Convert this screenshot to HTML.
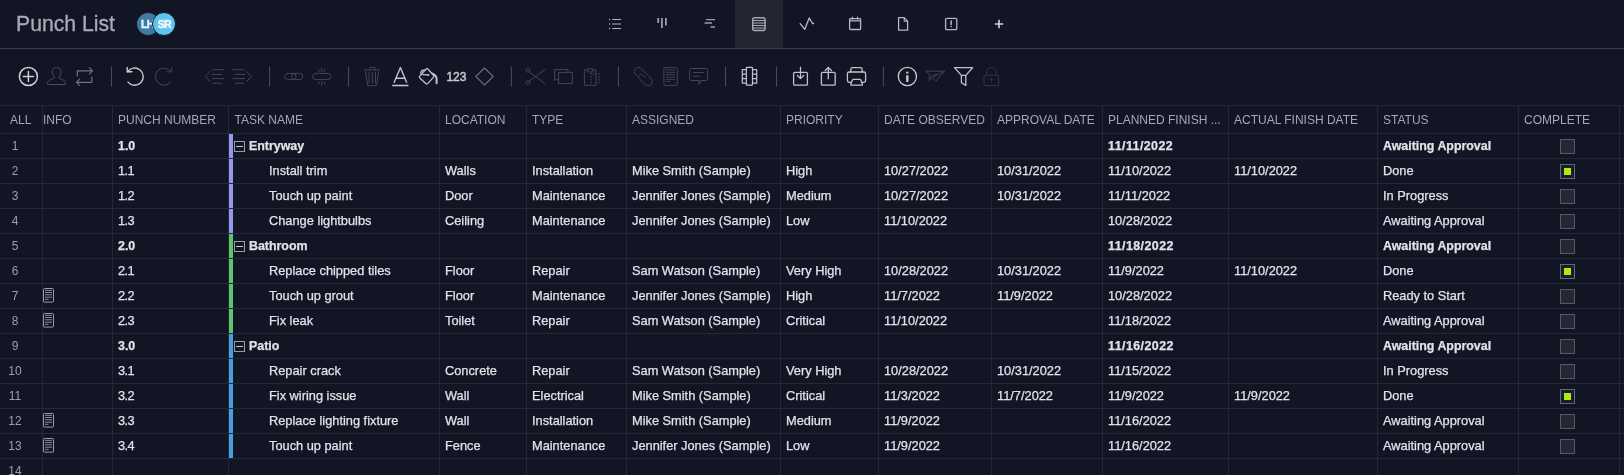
<!DOCTYPE html><html><head><meta charset="utf-8"><title>Punch List</title><style>
html,body{margin:0;padding:0;background:#111524;width:1624px;height:475px;overflow:hidden;position:relative;font-family:"Liberation Sans",sans-serif;}
.t{position:absolute;white-space:nowrap;}
.g{position:absolute;left:0;top:0;width:1624px;height:475px;will-change:transform;}
.h{font-size:12px;color:#a5a7b3;top:107px;line-height:27px;height:27px;}
.c{font-size:12.8px;color:#e2e3e8;line-height:24px;-webkit-text-stroke:0.25px #e2e3e8;}
.n{font-size:12px;color:#9d9faa;line-height:24px;}
.b{font-weight:bold;font-size:12.4px;}
.hl{position:absolute;left:0;width:1624px;height:1px;background:#252836;}
.vl{position:absolute;top:105px;height:370px;width:1px;background:#252836;}
.cb{position:absolute;left:1560px;width:13px;height:13px;border:1px solid #575a66;background:#252833;}
.cb i{position:absolute;left:3px;top:3px;width:7px;height:7px;background:#acec14;}
.cb.k{background:#1a1d29;border-color:#666975;}
.bar{position:absolute;left:229px;width:4px;height:24px;}
.mb{position:absolute;left:234px;width:9px;height:9px;border:1px solid #9a9ca6;}
.mb i{position:absolute;left:1px;top:4px;width:7px;height:1px;background:#c4c6cf;}
</style></head><body><div class="g">
<div class="t" style="left:16px;top:8.5px;font-size:21.2px;line-height:30px;color:#a9abb7;-webkit-text-stroke:0.3px #a9abb7;">Punch List</div>
<div style="position:absolute;left:137px;top:13px;width:22px;height:22px;border-radius:50%;background:#3d7aa8;"></div>
<div class="t" style="left:141px;top:12.5px;width:20px;font-size:10.6px;letter-spacing:-0.6px;line-height:22px;font-weight:bold;color:#eef3f8;-webkit-text-stroke:0.3px #eef3f8;">LH</div>
<div style="position:absolute;left:152px;top:12px;width:22px;height:22px;border-radius:50%;background:#5fc4ed;border:1px solid #111524;"></div>
<div class="t" style="left:153px;top:12.5px;width:23px;text-align:center;font-size:10.6px;letter-spacing:-0.6px;text-indent:-0.6px;line-height:22px;font-weight:bold;color:#f4f9fd;-webkit-text-stroke:0.3px #f4f9fd;">SR</div>
<div style="position:absolute;left:735px;top:0;width:48px;height:48px;background:#232631;"></div>
<div class="hl" style="top:48px;background:#393c4b;"></div>
<svg style="position:absolute;left:0;top:0" width="1624" height="105" viewBox="0 0 1624 105" fill="none" stroke-linecap="round" stroke-linejoin="round">
<!-- top nav -->
<g stroke="#b4b6c1" stroke-width="1.1" stroke-linecap="butt">
  <path d="M612.2 19.5H621M612.2 24H621M612.2 28.5H621"/>
</g>
<g fill="#b4b6c1"><circle cx="609.6" cy="19.5" r="0.65"/><circle cx="609.6" cy="24" r="0.65"/><circle cx="609.6" cy="28.5" r="0.65"/></g>
<g fill="#9a9ca8">
  <rect x="657.3" y="18" width="1.8" height="5"/><rect x="661" y="18" width="1.8" height="10"/><rect x="665" y="18" width="1.8" height="7.5"/>
</g>
<g stroke="#9a9ca8" stroke-width="1.4" stroke-linecap="butt">
  <path d="M706 19.6H715M704.5 23H712M710.5 27H715"/>
</g>
<g stroke="#a5a7b2" stroke-width="1.4">
  <rect x="752.7" y="17.7" width="12.4" height="12.8" rx="2"/>
  <path d="M753 20.5H765M753 23H765M753 25.5H765M753 28H765" stroke-width="1.1"/>
</g>
<g stroke="#b9bbc5" stroke-width="1.3">
  <path d="M800.2 23.6L804.8 29.3L809.2 18L812.5 23.5H813.6"/>
</g>
<g stroke="#b4b6c1" stroke-width="1.3">
  <rect x="849.6" y="18.7" width="11" height="10.8" rx="0.8"/>
  <path d="M849.6 20.9H860.6M852.4 17.2V19M857.5 17.2V19"/>
</g>
<g stroke="#b4b6c1" stroke-width="1.3">
  <path d="M898.6 17.6H904.2L907.6 21.2V30.2H898.6Z"/>
  <path d="M904.2 17.8V21.2H907.4" stroke-width="1.1"/>
</g>
<g stroke="#b4b6c1" stroke-width="1.3">
  <rect x="945.6" y="18.3" width="11.2" height="11.4" rx="1.2"/>
  <path d="M951.2 21V24.4" stroke-width="1.5"/>
</g>
<circle cx="951.2" cy="26.6" r="0.8" fill="#b4b6c1"/>
<g stroke="#d2d3da" stroke-width="1.6" stroke-linecap="butt">
  <path d="M994.8 24H1003.2M999 19.8V28.2"/>
</g>
<!-- toolbar -->
<g stroke="#cdced6" stroke-width="1.5">
  <circle cx="28.4" cy="76.5" r="9"/>
  <path d="M23.3 76.5H33.5M28.4 71.4V81.6"/>
</g>
<g stroke="#4a4d59" stroke-width="1">
  <path d="M54.6 77.6C52.6 75.6 52.3 73 52.3 71.6C52.3 69 54 67.6 56.6 67.6C59.2 67.6 60.9 69 60.9 71.6C60.9 73 60.6 75.6 58.6 77.6C60 79 62.4 79.4 64 80.4C65.5 81.4 66 83 65.6 84.5H47.6C47.2 83 47.7 81.4 49.2 80.4C50.8 79.4 53.2 79 54.6 77.6Z"/>
</g>
<g stroke="#72757f" stroke-width="1.2">
  <path d="M77.3 75.8V70.8H92.3M89.4 67.7L92.4 70.8L89.4 73.9"/>
  <path d="M91.8 77.2V82.3H76.6M79.5 79.2L76.5 82.3L79.5 85.4"/>
</g>
<g stroke="#474a57" stroke-width="1.1"><path d="M111.5 67V86M269.6 67V86M348.5 67V86M511.4 67V86M618.4 67V86M725.5 67V86M776.5 67V86M883.4 67V86"/></g>
<g stroke="#c8c9d1" stroke-width="1.4">
  <path d="M128 82.1A8.6 8.6 0 1 0 127.5 71.9"/>
  <path d="M127.2 67.4V71.8H131.9"/>
</g>
<g stroke="#444753" stroke-width="1">
  <path d="M170.7 82.1A8.6 8.6 0 1 1 171.2 71.9"/>
  <path d="M171.7 67.4V71.8H167"/>
</g>
<g stroke="#444753" stroke-width="1">
  <path d="M212.8 69.7H224M212.2 74.4H221.6M212.2 78.6H224M212.8 83.2H221.6M210.2 71.4L205.5 76.5L210.2 81.6"/>
  <path d="M233 69.7H244M235.4 74.4H244.6M233 78.6H244.6M235.4 83.2H244M246.6 71.4L251.3 76.5L246.6 81.6"/>
</g>
<g stroke="#444753" stroke-width="1">
  <rect x="284.6" y="73.4" width="11.4" height="6.2" rx="3.1"/>
  <rect x="291.4" y="73.4" width="11.4" height="6.2" rx="3.1"/>
  <rect x="312.6" y="73.4" width="18.4" height="6.2" rx="3.1"/>
  <path d="M321.7 68.2V71.2M318.2 69.2L319.8 71.6M325.2 69.2L323.6 71.6M321.7 82V85.4M318.2 84.4L319.8 82M325.2 84.4L323.6 82"/>
</g>
<g stroke="#444753" stroke-width="1">
  <path d="M364.3 70H379.6M369.6 70V67.6H375V70M365.6 71.6L367.6 85.6H376.7L378.6 71.6M369.1 72.6V83M372.3 72.6V83M375.5 72.6V83"/>
</g>
<g stroke="#c1c3cc" stroke-width="1.4" stroke-linecap="butt">
  <path d="M394 82.8L400.4 67.6L406.8 82.8M396 78.2H404.8"/>
  <path d="M392.2 85.5H408.4" stroke-width="1.6"/>
</g>
<g stroke="#c1c3cc" stroke-width="1.3">
  <path d="M425.9 69.2Q427 68 428.1 69.2L433.4 75.2Q434.4 76.3 433.4 77.4L427.9 83.4Q426.8 84.6 425.7 83.5L419.9 78Q418.8 77 419.9 75.9Z"/>
  <path d="M421.4 74.6C419.9 72.6 421.4 69.6 424.9 70.4"/>
  <path d="M422.8 74.6L428.4 74.9"/>
  <path d="M432.6 73.6C435.6 75 436.6 76.6 436.6 79V83.2" stroke-width="2"/>
</g>
<circle cx="428.4" cy="74.9" r="1" fill="#c1c3cc"/>
<text x="446.4" y="81.2" fill="#c8c9d1" stroke="#c8c9d1" stroke-width="0.45" font-family="Liberation Sans" font-size="12.1">123</text>
<g stroke="#666977" stroke-width="1.2">
  <path d="M484.5 68L493.2 76.5L484.5 85L475.8 76.5Z"/>
</g>
<g stroke="#444753" stroke-width="1">
  <circle cx="527.9" cy="70.3" r="1.9"/><circle cx="527.9" cy="82.6" r="1.9"/>
  <path d="M529.3 71.8L545 83.8M529.3 81.1L545 69.5"/>
</g>
<g stroke="#444753" stroke-width="1">
  <path d="M558.8 79.8H554.6V69.6H568V72.6"/>
  <rect x="559" y="72.4" width="13.4" height="11.2"/>
</g>
<g stroke="#444753" stroke-width="1">
  <path d="M587.6 69.8H584.4V85.3H596V69.8H592.8"/>
  <path d="M587.6 71.5V68.8H592.8V71.5Z"/>
  <path d="M591 73.5V74M591 76.5V77M591 79.5V80M591 82.3V82.8M599 73.5V74M599 76.5V77M599 79.5V80M599 82.3V82.8M594 73.5V74" stroke-width="1.3"/>
</g>
<g stroke="#444753" stroke-width="1">
  <path d="M636.6 75.6C634 73.4 633.6 70 636 68.2C637.8 66.8 640 67.4 641.6 69L651 78.4C652.8 80.2 652.8 83.4 651 84.9C649.2 86.4 646.6 86 645 84.4L639.4 78.8C638.2 77.6 638.3 76 639.5 75.1C640.7 74.2 642.3 74.5 643.3 75.5L645.7 77.9"/>
</g>
<g stroke="#444753" stroke-width="1">
  <rect x="663.9" y="67.7" width="13.4" height="17.7" rx="1"/>
  <path d="M666.2 69.9H674.6M666.2 72.3H674.6M666.2 74.7H674.6M666.2 77.1H674.6M666.2 79.4H674.6M666.2 81.6H670.4" stroke-width="0.9"/>
</g>
<g stroke="#444753" stroke-width="1">
  <path d="M691.4 68.5H706C707 68.5 707.5 69 707.5 70V79C707.5 80 707 80.5 706 80.5H701.2L698.8 84.3L699.6 80.5H691.4C690.4 80.5 689.6 80 689.6 79V70C689.6 69 690.4 68.5 691.4 68.5Z"/>
  <path d="M693.2 72.5H703.8M693.2 76.2H699.4"/>
</g>
<g stroke="#c1c3cc" stroke-width="1.2">
  <rect x="746.3" y="67.4" width="6.2" height="17.8" rx="0.8"/>
  <path d="M746.3 69.6H742.3V83.2H746.3M742.3 74.2H746.3M742.3 78.7H746.3"/>
  <path d="M752.5 69.6H756.7V83.2H752.5M756.7 74.2H752.5M756.7 78.7H752.5"/>
</g>
<g stroke="#c1c3cc" stroke-width="1.3">
  <rect x="793.6" y="72.4" width="13.8" height="12.8" rx="1.2"/>
  <path d="M800.5 67.2V78.6M797.4 75.5L800.5 78.6L803.6 75.5"/>
  <rect x="821.4" y="72.4" width="13.8" height="12.8" rx="1.2"/>
  <path d="M828.3 78.8V67.4M825.2 70.5L828.3 67.4L831.4 70.5"/>
</g>
<g stroke="#c1c3cc" stroke-width="1.3">
  <path d="M850.8 72V69.4C850.8 68.2 851.6 67.6 852.6 67.6H860.4C861.6 67.6 862.2 68.2 862.2 69.4V72"/>
  <path d="M850.8 82.4H849.2C848 82.4 847.4 81.8 847.4 80.6V73.8C847.4 72.6 848 72 849.2 72H863.8C865 72 865.6 72.6 865.6 73.8V80.6C865.6 81.8 865 82.4 863.8 82.4H862.2"/>
  <path d="M851.4 85.2H861.8Q862.8 85.2 862.4 84.2L861 80.4Q860.6 79.4 859.6 79.4H853.6Q852.6 79.4 852.2 80.4L850.8 84.2Q850.4 85.2 851.4 85.2Z"/>
</g>
<g stroke="#c6c7cf" stroke-width="1.3">
  <circle cx="907.4" cy="76.5" r="9.1"/>
</g>
<circle cx="907.3" cy="72.6" r="1.2" fill="#c6c7cf"/>
<rect x="906.1" y="75.3" width="2.4" height="6.6" fill="#c6c7cf"/>
<g stroke="#40434f" stroke-width="1">
  <path d="M926.2 71.2H944.4L935.9 81.2L932.4 77.6L929.3 80.4V74.2ZM932.4 77.6L944.4 71.2M929.3 78C931 75.6 934 74.4 937.6 74.6"/>
</g>
<g stroke="#c1c3cc" stroke-width="1.3">
  <path d="M954.5 67.6H972.7L965.8 75.4V85.4L961.4 82.8V75.4ZM961.4 75.4H965.8"/>
</g>
<g stroke="#33363f" stroke-width="1">
  <path d="M986.8 75V71.8C986.8 69 988.8 67.4 991.5 67.4C994.2 67.4 996.1 69 996.1 71.8V75"/>
  <rect x="984.4" y="75.2" width="14.2" height="10.4"/>
  <path d="M991.5 78.6V81.6M990.4 79.6L991.5 78.5L992.6 79.6"/>
</g>

</svg>
<div class="hl" style="top:105px;"></div>
<div class="hl" style="top:133px;"></div>
<div class="hl" style="top:158px;"></div>
<div class="hl" style="top:183px;"></div>
<div class="hl" style="top:208px;"></div>
<div class="hl" style="top:233px;"></div>
<div class="hl" style="top:258px;"></div>
<div class="hl" style="top:283px;"></div>
<div class="hl" style="top:308px;"></div>
<div class="hl" style="top:333px;"></div>
<div class="hl" style="top:358px;"></div>
<div class="hl" style="top:383px;"></div>
<div class="hl" style="top:408px;"></div>
<div class="hl" style="top:433px;"></div>
<div class="hl" style="top:458px;"></div>
<div class="vl" style="left:42px;"></div>
<div class="vl" style="left:112px;"></div>
<div class="vl" style="left:228px;"></div>
<div class="vl" style="left:439px;"></div>
<div class="vl" style="left:526px;"></div>
<div class="vl" style="left:626px;"></div>
<div class="vl" style="left:780px;"></div>
<div class="vl" style="left:878px;"></div>
<div class="vl" style="left:991px;"></div>
<div class="vl" style="left:1102px;"></div>
<div class="vl" style="left:1228px;"></div>
<div class="vl" style="left:1377px;"></div>
<div class="vl" style="left:1518px;"></div>
<div class="vl" style="left:1619px;"></div>
<div class="t h" style="left:10px;">ALL</div>
<div class="t h" style="left:43px;">INFO</div>
<div class="t h" style="left:118px;">PUNCH NUMBER</div>
<div class="t h" style="left:234.5px;">TASK NAME</div>
<div class="t h" style="left:445px;">LOCATION</div>
<div class="t h" style="left:532px;">TYPE</div>
<div class="t h" style="left:632px;">ASSIGNED</div>
<div class="t h" style="left:786px;">PRIORITY</div>
<div class="t h" style="left:884px;">DATE OBSERVED</div>
<div class="t h" style="left:997px;">APPROVAL DATE</div>
<div class="t h" style="left:1108px;">PLANNED FINISH ...</div>
<div class="t h" style="left:1234px;">ACTUAL FINISH DATE</div>
<div class="t h" style="left:1383px;">STATUS</div>
<div class="t h" style="left:1524px;">COMPLETE</div>
<div class="t n" style="left:0;width:30px;text-align:center;top:134px;">1</div>
<div class="bar" style="top:134px;background:#9797f1;"></div>
<div class="t c b" style="left:118px;top:134px;">1.0</div>
<div class="t c b" style="left:1108px;top:134px;letter-spacing:0.45px;">11/11/2022</div>
<div class="t c b" style="left:1383px;top:134px;">Awaiting Approval</div>
<div class="mb" style="top:141px;"><i></i></div>
<div class="t c b" style="left:249px;top:134px;">Entryway</div>
<div class="cb" style="top:139px;"></div>
<div class="t n" style="left:0;width:30px;text-align:center;top:159px;">2</div>
<div class="bar" style="top:159px;background:#9797f1;"></div>
<div class="t c" style="left:118px;top:159px;letter-spacing:-0.6px;">1.1</div>
<div class="t c" style="left:445px;top:159px;">Walls</div>
<div class="t c" style="left:532px;top:159px;">Installation</div>
<div class="t c" style="left:632px;top:159px;">Mike Smith (Sample)</div>
<div class="t c" style="left:786px;top:159px;">High</div>
<div class="t c" style="left:884px;top:159px;">10/27/2022</div>
<div class="t c" style="left:997px;top:159px;">10/31/2022</div>
<div class="t c" style="left:1108px;top:159px;">11/10/2022</div>
<div class="t c" style="left:1234px;top:159px;">11/10/2022</div>
<div class="t c" style="left:1383px;top:159px;">Done</div>
<div class="t c" style="left:269px;top:159px;">Install trim</div>
<div class="cb k" style="top:164px;"><i></i></div>
<div class="t n" style="left:0;width:30px;text-align:center;top:184px;">3</div>
<div class="bar" style="top:184px;background:#9797f1;"></div>
<div class="t c" style="left:118px;top:184px;letter-spacing:-0.6px;">1.2</div>
<div class="t c" style="left:445px;top:184px;">Door</div>
<div class="t c" style="left:532px;top:184px;">Maintenance</div>
<div class="t c" style="left:632px;top:184px;">Jennifer Jones (Sample)</div>
<div class="t c" style="left:786px;top:184px;">Medium</div>
<div class="t c" style="left:884px;top:184px;">10/27/2022</div>
<div class="t c" style="left:997px;top:184px;">10/31/2022</div>
<div class="t c" style="left:1108px;top:184px;">11/11/2022</div>
<div class="t c" style="left:1383px;top:184px;">In Progress</div>
<div class="t c" style="left:269px;top:184px;">Touch up paint</div>
<div class="cb" style="top:189px;"></div>
<div class="t n" style="left:0;width:30px;text-align:center;top:209px;">4</div>
<div class="bar" style="top:209px;background:#9797f1;"></div>
<div class="t c" style="left:118px;top:209px;letter-spacing:-0.6px;">1.3</div>
<div class="t c" style="left:445px;top:209px;">Ceiling</div>
<div class="t c" style="left:532px;top:209px;">Maintenance</div>
<div class="t c" style="left:632px;top:209px;">Jennifer Jones (Sample)</div>
<div class="t c" style="left:786px;top:209px;">Low</div>
<div class="t c" style="left:884px;top:209px;">11/10/2022</div>
<div class="t c" style="left:1108px;top:209px;">10/28/2022</div>
<div class="t c" style="left:1383px;top:209px;">Awaiting Approval</div>
<div class="t c" style="left:269px;top:209px;">Change lightbulbs</div>
<div class="cb" style="top:214px;"></div>
<div class="t n" style="left:0;width:30px;text-align:center;top:234px;">5</div>
<div class="bar" style="top:234px;background:#5cc66a;"></div>
<div class="t c b" style="left:118px;top:234px;">2.0</div>
<div class="t c b" style="left:1108px;top:234px;letter-spacing:0.45px;">11/18/2022</div>
<div class="t c b" style="left:1383px;top:234px;">Awaiting Approval</div>
<div class="mb" style="top:241px;"><i></i></div>
<div class="t c b" style="left:249px;top:234px;">Bathroom</div>
<div class="cb" style="top:239px;"></div>
<div class="t n" style="left:0;width:30px;text-align:center;top:259px;">6</div>
<div class="bar" style="top:259px;background:#5cc66a;"></div>
<div class="t c" style="left:118px;top:259px;letter-spacing:-0.6px;">2.1</div>
<div class="t c" style="left:445px;top:259px;">Floor</div>
<div class="t c" style="left:532px;top:259px;">Repair</div>
<div class="t c" style="left:632px;top:259px;">Sam Watson (Sample)</div>
<div class="t c" style="left:786px;top:259px;">Very High</div>
<div class="t c" style="left:884px;top:259px;">10/28/2022</div>
<div class="t c" style="left:997px;top:259px;">10/31/2022</div>
<div class="t c" style="left:1108px;top:259px;">11/9/2022</div>
<div class="t c" style="left:1234px;top:259px;">11/10/2022</div>
<div class="t c" style="left:1383px;top:259px;">Done</div>
<div class="t c" style="left:269px;top:259px;">Replace chipped tiles</div>
<div class="cb k" style="top:264px;"><i></i></div>
<div class="t n" style="left:0;width:30px;text-align:center;top:284px;">7</div>
<svg style="position:absolute;left:42px;top:283px" width="14" height="20" viewBox="0 0 14 20" fill="none"><rect x="1.5" y="5.5" width="10" height="13.6" rx="1" stroke="#9a9ca7" stroke-width="1"/><path d="M3 7.4H10M3 9.5H10M3 11.8H10M3 14.2H10M3 16.3H6.5" stroke="#8a8c97" stroke-width="1"/></svg>
<div class="bar" style="top:284px;background:#5cc66a;"></div>
<div class="t c" style="left:118px;top:284px;letter-spacing:-0.6px;">2.2</div>
<div class="t c" style="left:445px;top:284px;">Floor</div>
<div class="t c" style="left:532px;top:284px;">Maintenance</div>
<div class="t c" style="left:632px;top:284px;">Jennifer Jones (Sample)</div>
<div class="t c" style="left:786px;top:284px;">High</div>
<div class="t c" style="left:884px;top:284px;">11/7/2022</div>
<div class="t c" style="left:997px;top:284px;">11/9/2022</div>
<div class="t c" style="left:1108px;top:284px;">10/28/2022</div>
<div class="t c" style="left:1383px;top:284px;">Ready to Start</div>
<div class="t c" style="left:269px;top:284px;">Touch up grout</div>
<div class="cb" style="top:289px;"></div>
<div class="t n" style="left:0;width:30px;text-align:center;top:309px;">8</div>
<svg style="position:absolute;left:42px;top:308px" width="14" height="20" viewBox="0 0 14 20" fill="none"><rect x="1.5" y="5.5" width="10" height="13.6" rx="1" stroke="#9a9ca7" stroke-width="1"/><path d="M3 7.4H10M3 9.5H10M3 11.8H10M3 14.2H10M3 16.3H6.5" stroke="#8a8c97" stroke-width="1"/></svg>
<div class="bar" style="top:309px;background:#5cc66a;"></div>
<div class="t c" style="left:118px;top:309px;letter-spacing:-0.6px;">2.3</div>
<div class="t c" style="left:445px;top:309px;">Toilet</div>
<div class="t c" style="left:532px;top:309px;">Repair</div>
<div class="t c" style="left:632px;top:309px;">Sam Watson (Sample)</div>
<div class="t c" style="left:786px;top:309px;">Critical</div>
<div class="t c" style="left:884px;top:309px;">11/10/2022</div>
<div class="t c" style="left:1108px;top:309px;">11/18/2022</div>
<div class="t c" style="left:1383px;top:309px;">Awaiting Approval</div>
<div class="t c" style="left:269px;top:309px;">Fix leak</div>
<div class="cb" style="top:314px;"></div>
<div class="t n" style="left:0;width:30px;text-align:center;top:334px;">9</div>
<div class="bar" style="top:334px;background:#44a0e2;"></div>
<div class="t c b" style="left:118px;top:334px;">3.0</div>
<div class="t c b" style="left:1108px;top:334px;letter-spacing:0.45px;">11/16/2022</div>
<div class="t c b" style="left:1383px;top:334px;">Awaiting Approval</div>
<div class="mb" style="top:341px;"><i></i></div>
<div class="t c b" style="left:249px;top:334px;">Patio</div>
<div class="cb" style="top:339px;"></div>
<div class="t n" style="left:0;width:30px;text-align:center;top:359px;">10</div>
<div class="bar" style="top:359px;background:#44a0e2;"></div>
<div class="t c" style="left:118px;top:359px;letter-spacing:-0.6px;">3.1</div>
<div class="t c" style="left:445px;top:359px;">Concrete</div>
<div class="t c" style="left:532px;top:359px;">Repair</div>
<div class="t c" style="left:632px;top:359px;">Sam Watson (Sample)</div>
<div class="t c" style="left:786px;top:359px;">Very High</div>
<div class="t c" style="left:884px;top:359px;">10/28/2022</div>
<div class="t c" style="left:997px;top:359px;">10/31/2022</div>
<div class="t c" style="left:1108px;top:359px;">11/15/2022</div>
<div class="t c" style="left:1383px;top:359px;">In Progress</div>
<div class="t c" style="left:269px;top:359px;">Repair crack</div>
<div class="cb" style="top:364px;"></div>
<div class="t n" style="left:0;width:30px;text-align:center;top:384px;">11</div>
<div class="bar" style="top:384px;background:#44a0e2;"></div>
<div class="t c" style="left:118px;top:384px;letter-spacing:-0.6px;">3.2</div>
<div class="t c" style="left:445px;top:384px;">Wall</div>
<div class="t c" style="left:532px;top:384px;">Electrical</div>
<div class="t c" style="left:632px;top:384px;">Mike Smith (Sample)</div>
<div class="t c" style="left:786px;top:384px;">Critical</div>
<div class="t c" style="left:884px;top:384px;">11/3/2022</div>
<div class="t c" style="left:997px;top:384px;">11/7/2022</div>
<div class="t c" style="left:1108px;top:384px;">11/9/2022</div>
<div class="t c" style="left:1234px;top:384px;">11/9/2022</div>
<div class="t c" style="left:1383px;top:384px;">Done</div>
<div class="t c" style="left:269px;top:384px;">Fix wiring issue</div>
<div class="cb k" style="top:389px;"><i></i></div>
<div class="t n" style="left:0;width:30px;text-align:center;top:409px;">12</div>
<svg style="position:absolute;left:42px;top:408px" width="14" height="20" viewBox="0 0 14 20" fill="none"><rect x="1.5" y="5.5" width="10" height="13.6" rx="1" stroke="#9a9ca7" stroke-width="1"/><path d="M3 7.4H10M3 9.5H10M3 11.8H10M3 14.2H10M3 16.3H6.5" stroke="#8a8c97" stroke-width="1"/></svg>
<div class="bar" style="top:409px;background:#44a0e2;"></div>
<div class="t c" style="left:118px;top:409px;letter-spacing:-0.6px;">3.3</div>
<div class="t c" style="left:445px;top:409px;">Wall</div>
<div class="t c" style="left:532px;top:409px;">Installation</div>
<div class="t c" style="left:632px;top:409px;">Mike Smith (Sample)</div>
<div class="t c" style="left:786px;top:409px;">Medium</div>
<div class="t c" style="left:884px;top:409px;">11/9/2022</div>
<div class="t c" style="left:1108px;top:409px;">11/16/2022</div>
<div class="t c" style="left:1383px;top:409px;">Awaiting Approval</div>
<div class="t c" style="left:269px;top:409px;">Replace lighting fixture</div>
<div class="cb" style="top:414px;"></div>
<div class="t n" style="left:0;width:30px;text-align:center;top:434px;">13</div>
<svg style="position:absolute;left:42px;top:433px" width="14" height="20" viewBox="0 0 14 20" fill="none"><rect x="1.5" y="5.5" width="10" height="13.6" rx="1" stroke="#9a9ca7" stroke-width="1"/><path d="M3 7.4H10M3 9.5H10M3 11.8H10M3 14.2H10M3 16.3H6.5" stroke="#8a8c97" stroke-width="1"/></svg>
<div class="bar" style="top:434px;background:#44a0e2;"></div>
<div class="t c" style="left:118px;top:434px;letter-spacing:-0.6px;">3.4</div>
<div class="t c" style="left:445px;top:434px;">Fence</div>
<div class="t c" style="left:532px;top:434px;">Maintenance</div>
<div class="t c" style="left:632px;top:434px;">Jennifer Jones (Sample)</div>
<div class="t c" style="left:786px;top:434px;">Low</div>
<div class="t c" style="left:884px;top:434px;">11/9/2022</div>
<div class="t c" style="left:1108px;top:434px;">11/16/2022</div>
<div class="t c" style="left:1383px;top:434px;">Awaiting Approval</div>
<div class="t c" style="left:269px;top:434px;">Touch up paint</div>
<div class="cb" style="top:439px;"></div>
<div class="t n" style="left:0;width:30px;text-align:center;top:459px;">14</div>
</div></body></html>
